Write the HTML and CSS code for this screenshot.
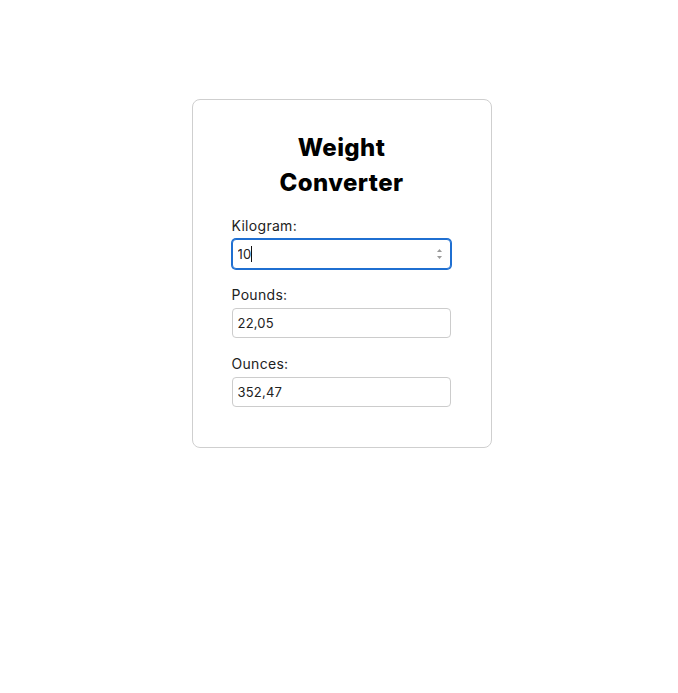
FILE: index.html
```html
<!DOCTYPE html>
<html lang="en">
<head>
<meta charset="utf-8">
<title>Weight Converter</title>
<link rel="stylesheet" href="styles.css">
</head>
<body>
<main class="page">
  <section class="card">
    <h1 class="title">Weight Converter</h1>
    <div class="field">
      <label class="label" for="kg">Kilogram:</label>
      <div class="input-wrap">
        <input class="input input-focus" id="kg" type="number" value="10">
        <span class="caret"></span>
        <svg class="spinner" width="7" height="14" viewBox="0 0 7 14" aria-hidden="true">
          <path d="M1 5 L3.5 2 L6 5 Z" fill="#9a9a9a"/>
          <path d="M1 9 L3.5 12 L6 9 Z" fill="#9a9a9a"/>
        </svg>
      </div>
    </div>
    <div class="field">
      <label class="label" for="lb">Pounds:</label>
      <input class="input" id="lb" type="text" value="22,05">
    </div>
    <div class="field">
      <label class="label" for="oz">Ounces:</label>
      <input class="input" id="oz" type="text" value="352,47">
    </div>
  </section>
</main>
</body>
</html>
```

FILE: styles.css
```css
html, body {
  margin: 0;
  padding: 0;
  background: #fff;
}

body {
  font-family: "Inter", "Open Sans", sans-serif;
  color: #111;
}

.page {
  display: flex;
  justify-content: center;
  padding: 99px 0 0 5px;
}

.card {
  width: 220px;
  padding: 30px 39px 40px;
  border: 1px solid #cfcfcf;
  border-radius: 8px;
  display: flex;
  flex-direction: column;
  gap: 15px;
}

.title {
  margin: 0;
  font-size: 24px;
  line-height: 35px;
  font-weight: 800;
  letter-spacing: 0.4px;
  text-align: center;
  color: #000;
  padding: 0 12px;
}

.field {
  display: flex;
  flex-direction: column;
  gap: 3px;
}

.label {
  font-size: 14px;
  line-height: 21px;
  letter-spacing: 0.3px;
  color: #222;
}

.input-wrap {
  position: relative;
  width: 219px;
  height: 30px;
}

.input {
  box-sizing: border-box;
  width: 219px;
  height: 30px;
  margin: 0;
  padding: 0 5px;
  border: 1px solid #cccccc;
  border-radius: 4px;
  font-family: inherit;
  font-size: 13px;
  letter-spacing: 0.2px;
  color: #222;
  background: #fff;
  outline: none;
}

.input[type="number"] {
  -moz-appearance: textfield;
  appearance: textfield;
}

.input::-webkit-inner-spin-button,
.input::-webkit-outer-spin-button {
  -webkit-appearance: none;
  margin: 0;
}

.input-focus {
  border: 1px solid #1f6fd1;
  box-shadow: 0 0 0 1px #1f6fd1;
}

.caret {
  position: absolute;
  left: 19px;
  top: 7px;
  width: 1px;
  height: 16px;
  background: #111;
}

.spinner {
  position: absolute;
  right: 8px;
  top: 8px;
}
```
